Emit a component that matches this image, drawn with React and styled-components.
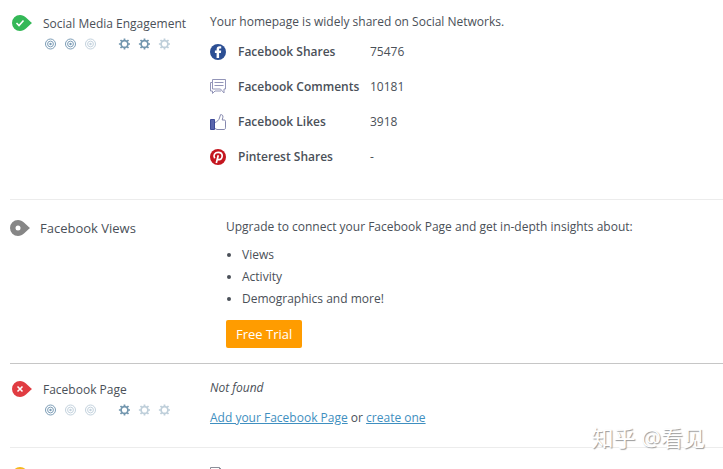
import React from 'react';
import styled, { createGlobalStyle } from 'styled-components';

const GlobalStyle = createGlobalStyle`
  * {
    box-sizing: border-box;
  }
  body {
    margin: 0;
    background-color: #fff;
    color: #4a5058;
    font-family: 'Open Sans', 'Noto Sans', sans-serif;
    font-size: 12px;
    line-height: 22px;
  }
  p, ul, h3 {
    margin: 0;
    padding: 0;
  }
  svg {
    display: block;
    flex: none;
  }
`;

const ReportBlock = styled.main`
  position: relative;
  height: 100vh;
  padding-left: 10px;
  overflow: hidden;
`;

const SectionBlock = styled.section`
  display: grid;
  grid-template-columns: 200px 1fr;
  border-bottom: 1px solid ${(props) => props.$line || '#ececec'};
`;

const SideBlock = styled.div`
  display: flex;
  align-items: flex-start;
  gap: ${(props) => (props.$large ? '10px' : '11px')};
  padding: ${(props) => props.$pad};

  .drop {
    margin-top: ${(props) => (props.$large ? '3px' : '1px')};
  }
  .title {
    font-size: ${(props) => (props.$large ? '13px' : '12px')};
    font-weight: 400;
    line-height: ${(props) => (props.$large ? '22px' : '20px')};
  }
`;

const RatingBlock = styled.div`
  display: flex;
  gap: 22px;
  padding: 4px 0 0 1px;

  .group {
    display: flex;
    gap: 8px;
  }
`;

const ContentBlock = styled.div`
  padding: ${(props) => props.$pad};
`;

const ShareTable = styled.table`
  margin-top: 1px;
  border-collapse: collapse;

  th,
  td {
    height: 35px;
    padding: 0;
    text-align: left;
    line-height: 20px;
  }
  .icon {
    width: 28px;
  }
  th {
    width: 132px;
    font-weight: 600;
  }
`;

const FeatureList = styled.ul`
  margin: 6px 0 10px;

  li {
    margin-left: 16px;
  }
`;

const TrialButton = styled.button`
  display: block;
  height: 28px;
  padding: 0 10px;
  border: 0;
  border-radius: 2px;
  background-color: #ff9c00;
  color: #fff;
  font-family: inherit;
  font-size: 13px;
  line-height: 28px;
  cursor: pointer;
`;

const LinkLine = styled.p`
  && {
    margin-top: 8px;
  }

  a {
    color: #3f8fc0;
    text-decoration: underline;
  }
`;

const Watermark = styled.div`
  position: absolute;
  right: 18px;
  bottom: 18px;
  color: #fff;
  font-family: 'Open Sans', 'Noto Sans CJK SC', sans-serif;
  font-size: 22px;
  line-height: 28px;
  text-shadow: 1px 1px 1px #999;
`;

const marks = {
  pass: { color: '#34b857', mark: <path d="M4.5 8l2.500 2.500 4.500-5" /> },
  fail: { color: '#e03c42', mark: <path d="M5.500 5.500l5 5M10.500 5.500l-5 5" /> },
  locked: {
    color: '#868686',
    mark: <circle cx="8" cy="8" r="2.500" fill="#fff" stroke="none" />,
  },
  warn: { color: '#f5b81c', mark: <path d="M5 8h6" /> },
};

const Drop = ({ status }) => (
  <svg className="drop" width="20" height="16" viewBox="0 0 20 16">
    <path
      d="M8 0C13 0 15 4 20 8C15 12 13 16 8 16A8 8 0 0 1 8 0Z"
      fill={marks[status].color}
    />
    <g fill="none" stroke="#fff" strokeWidth="1.600">
      {marks[status].mark}
    </g>
  </svg>
);

const Target = ({ on }) => (
  <svg width="12" height="12" viewBox="0 0 12 12" opacity={on ? 1 : 0.45}>
    <g fill="none" stroke="#7b9cb6">
      <circle cx="6.500" cy="6" r="5" />
      <circle cx="6.500" cy="6" r="2.900" />
    </g>
    <circle cx="6.500" cy="6" r="1.200" fill="#7b9cb6" />
  </svg>
);

const Gear = ({ on }) => (
  <svg width="12" height="12" viewBox="0 0 12 12" opacity={on ? 1 : 0.45}>
    <g fill="none" stroke="#7296ae" strokeWidth="1.700">
      <circle cx="6.500" cy="6" r="3.400" />
      <path d="M6.500 .4v2M6.500 9.600v2M.9 6h2M10.100 6h2M2.500 2l1.400 1.400M9.100 8.600L10.500 10M2.500 10l1.400-1.400M9.100 3.400L10.500 2" />
    </g>
  </svg>
);

const Rating = ({ impact, effort }) => (
  <RatingBlock>
    <div className="group">
      {[1, 2, 3].map((n) => (
        <Target key={n} on={n <= impact} />
      ))}
    </div>
    <div className="group">
      {[1, 2, 3].map((n) => (
        <Gear key={n} on={n <= effort} />
      ))}
    </div>
  </RatingBlock>
);

const FacebookIcon = () => (
  <svg width="16" height="16" viewBox="0 0 16 16">
    <circle cx="8" cy="8" r="8" fill="#2c4f94" />
    <path
      d="M6.600 14V8.900H4.900V6.600h1.700V5.200c0-2 1.100-3 2.900-3h1.700v2.300h-1.200c-.7 0-.9.3-.9.9v1.200h2.100l-.3 2.300H9.100V14z"
      fill="#fff"
    />
  </svg>
);

const CommentsIcon = () => (
  <svg width="16" height="16" viewBox="0 0 16 16">
    <g fill="none" stroke="#9395b8">
      <path d="M2.500 .5h13v9.500h-1.500v4l-3.500-4h-8z" />
      <path d="M4.500 3.500h9M4.500 6.500h9" />
      <path d="M2.500 3.500h-2v8.500h2v2.500l2.500-2.500h6" />
    </g>
  </svg>
);

const LikeIcon = () => (
  <svg width="16" height="16" viewBox="0 0 16 16">
    <path d="M.5 5.500h4v10h-4z" fill="#5965ad" stroke="#3e4b98" />
    <path
      d="M5 8.500c2-.7 4-2.500 4.500-4.500L10.500.700c1.600-.4 2.700.8 2.400 2.500L12.200 6h2.100c.8 0 1.200.5 1.200 1.200v6.600c0 1-.6 1.700-1.500 1.700H7L5 14.500"
      fill="#fff"
      stroke="#8588ae"
    />
  </svg>
);

const PinterestIcon = () => (
  <svg width="16" height="16" viewBox="0 0 16 16">
    <circle cx="8" cy="8" r="8" fill="#c4161f" />
    <path
      d="M4.700 9.200C2.800 6.200 5 3.300 8.200 3.300c2.400 0 4 1.500 4 3.500 0 2.300-1.500 3.900-3.100 3.900-.8 0-1.400-.4-1.600-1M8.300 6.200L6.300 14"
      fill="none"
      stroke="#fff"
      strokeWidth="1.700"
    />
  </svg>
);

const PageIcon = () => (
  <svg width="14" height="16" viewBox="0 0 14 16">
    <path
      d="M.5 .5h9l3 3v12h-12zM9.500 .5v3h3"
      fill="none"
      stroke="#8a8f99"
    />
  </svg>
);

const shares = [
  { name: 'Facebook Shares', value: '75476', icon: <FacebookIcon /> },
  { name: 'Facebook Comments', value: '10181', icon: <CommentsIcon /> },
  { name: 'Facebook Likes', value: '3918', icon: <LikeIcon /> },
  { name: 'Pinterest Shares', value: '-', icon: <PinterestIcon /> },
];

const App = () => {
  return (
    <>
      <GlobalStyle />
      <ReportBlock>
        <SectionBlock>
          <SideBlock $pad="14px 0 0 2px">
            <Drop status="pass" />
            <div>
              <h3 className="title">Social Media Engagement</h3>
              <Rating impact={2} effort={2} />
            </div>
          </SideBlock>
          <ContentBlock $pad="11px 0 25px">
            <p>Your homepage is widely shared on Social Networks.</p>
            <ShareTable>
              <tbody>
                {shares.map((share) => (
                  <tr key={share.name}>
                    <td className="icon">{share.icon}</td>
                    <th scope="row">{share.name}</th>
                    <td>{share.value}</td>
                  </tr>
                ))}
              </tbody>
            </ShareTable>
          </ContentBlock>
        </SectionBlock>

        <SectionBlock $line="#c6c6c6">
          <SideBlock $large $pad="17px 0 0">
            <Drop status="locked" />
            <h3 className="title">Facebook Views</h3>
          </SideBlock>
          <ContentBlock $pad="16px 0 15px 16px">
            <p>
              Upgrade to connect your Facebook Page and get in-depth insights
              about:
            </p>
            <FeatureList>
              <li>Views</li>
              <li>Activity</li>
              <li>Demographics and more!</li>
            </FeatureList>
            <TrialButton type="button">Free Trial</TrialButton>
          </ContentBlock>
        </SectionBlock>

        <SectionBlock>
          <SideBlock $pad="16px 0 0 2px">
            <Drop status="fail" />
            <div>
              <h3 className="title">Facebook Page</h3>
              <Rating impact={1} effort={1} />
            </div>
          </SideBlock>
          <ContentBlock $pad="13px 0 18px">
            <p>
              <em>Not found</em>
            </p>
            <LinkLine>
              <a href="#add">Add your Facebook Page</a> or{' '}
              <a href="#create">create one</a>
            </LinkLine>
          </ContentBlock>
        </SectionBlock>

        <SectionBlock>
          <SideBlock $pad="18px 0 0 2px">
            <Drop status="warn" />
          </SideBlock>
          <ContentBlock $pad="19px 0">
            <PageIcon />
          </ContentBlock>
        </SectionBlock>
        <Watermark>知乎 @看见</Watermark>
      </ReportBlock>
    </>
  );
};

export default App;
